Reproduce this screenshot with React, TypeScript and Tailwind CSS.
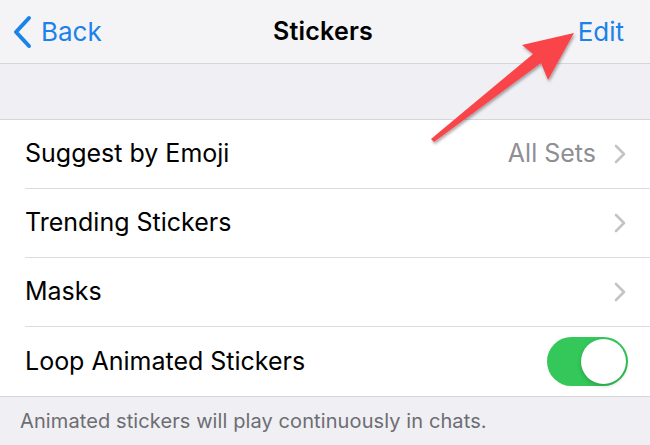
import React from "react";

const Chevron = () => (
  <svg width="14" height="22" viewBox="0 0 14 22" className="shrink-0">
    <path d="M3 3 L11 11 L3 19" fill="none" stroke="#c4c4c7" strokeWidth="2.6" strokeLinecap="round" strokeLinejoin="round" />
  </svg>
);

const Row = ({ label, value, chevron, toggle, last }: { label: string; value?: string; chevron?: boolean; toggle?: boolean; last?: boolean }) => (
  <div className="flex h-[69px] pl-[25px]">
    <div className={`flex flex-1 items-center pr-[23px] ${last ? "" : "border-b border-[#dcdce0]"}`}>
      <span className="flex-1 text-[25px] text-black">{label}</span>
      {value && <span className="text-[25px] text-[#8e8e93] mr-[17px]">{value}</span>}
      {chevron && <Chevron />}
      {toggle && (
        <div className="w-[81px] h-[49px] rounded-full bg-[#34c759] flex items-center justify-end pr-[2px] mr-[-1px]">
          <div className="w-[45px] h-[45px] rounded-full bg-white shadow-[0_2px_4px_rgba(0,0,0,0.2)]" />
        </div>
      )}
    </div>
  </div>
);

export default function App() {
  return (
    <div className="relative w-[650px] h-[445px] bg-[#efeff4] overflow-hidden" style={{ fontFamily: "Inter, 'Noto Sans', sans-serif" }}>
      <div className="h-[64px] bg-[#f4f4f6] border-b border-[#d6d6da] flex items-center px-[12px]">
        <div className="flex items-center flex-1 basis-0 text-[#1a82e8]">
          <svg width="22" height="34" viewBox="0 0 22 34">
            <path d="M17 3 L4 17 L17 31" fill="none" stroke="#1a82e8" strokeWidth="4" strokeLinecap="round" strokeLinejoin="round" />
          </svg>
          <span className="text-[26px] ml-[7px]">Back</span>
        </div>
        <span className="text-[25px] font-semibold text-black tracking-[0.2px] ml-[10px]">Stickers</span>
        <div className="flex-1 basis-0 flex justify-end pr-[14px]">
          <span className="text-[26px] text-[#1a82e8]">Edit</span>
        </div>
      </div>
      <div className="h-[56px] border-b border-[#d6d6da]" />
      <div className="bg-white border-b border-[#d6d6da]">
        <Row label="Suggest by Emoji" value="All Sets" chevron />
        <Row label="Trending Stickers" chevron />
        <Row label="Masks" chevron />
        <Row label="Loop Animated Stickers" toggle last />
      </div>
      <div className="px-[20px] pt-[9px] text-[20px] text-[#6d6d72] tracking-[0.1px]">Animated stickers will play continuously in chats.</div>

      <svg className="absolute left-0 top-0 pointer-events-none" width="650" height="445" viewBox="0 0 650 445">
        <defs>
          <filter id="sh" x="-20%" y="-20%" width="140%" height="140%">
            <feDropShadow dx="1" dy="2" stdDeviation="1.5" floodColor="#000" floodOpacity="0.35" />
          </filter>
        </defs>
        <path d="M574 33 L522 45 L533 54 L431 139 L434 142 L541 63 L548 80 Z" fill="#f94449" filter="url(#sh)" />
      </svg>
    </div>
  );
}
